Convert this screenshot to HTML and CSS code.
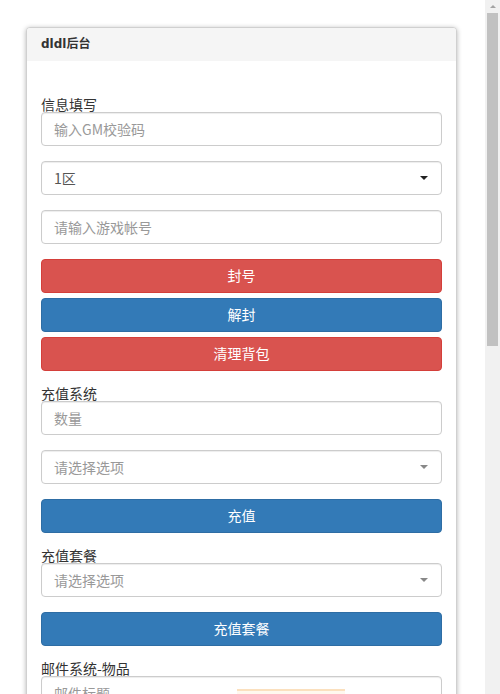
FILE: index.html
```html
<!DOCTYPE html>
<html lang="zh">
<head>
<meta charset="utf-8">
<title>dldl后台</title>
<link rel="stylesheet" href="styles.css">
</head>
<body>
<div class="page">
  <div class="panel">
    <div class="panel-heading">dldl后台</div>
    <div class="panel-body">
      <label class="lbl">信息填写</label>
      <div class="group"><div class="control placeholder">输入GM校验码</div></div>
      <div class="group"><div class="control select"><span>1区</span><i class="caret dark"></i></div></div>
      <div class="group"><div class="control placeholder">请输入游戏帐号</div></div>
      <div class="btns group">
        <button class="btn red">封号</button>
        <button class="btn blue">解封</button>
        <button class="btn red">清理背包</button>
      </div>

      <label class="lbl">充值系统</label>
      <div class="group"><div class="control placeholder">数量</div></div>
      <div class="group"><div class="control select placeholder"><span>请选择选项</span><i class="caret"></i></div></div>
      <div class="group"><button class="btn blue">充值</button></div>

      <label class="lbl">充值套餐</label>
      <div class="group"><div class="control select placeholder"><span>请选择选项</span><i class="caret"></i></div></div>
      <div class="group"><button class="btn blue">充值套餐</button></div>

      <label class="lbl">邮件系统-物品</label>
      <div class="group"><div class="control placeholder">邮件标题</div></div>
    </div>
  </div>
  <div class="toast"></div>
</div>
<div class="scrollbar"><div class="arrow"></div><div class="thumb"></div></div>
</body>
</html>
```
FILE: styles.css
```css
html, body {
  margin: 0;
  padding: 0;
  height: 100%;
  overflow: hidden;
  background: #fff;
}
body {
  font-family: "Noto Sans CJK SC", "Liberation Sans", sans-serif;
  font-size: 14px;
  color: #333;
}
.page {
  width: 485px;
  padding: 27px 0 0 26px;
  box-sizing: border-box;
}
.panel {
  width: 431px;
  box-sizing: border-box;
  border: 1px solid #d0d0d0;
  border-radius: 4px;
  box-shadow: 0 1px 5px rgba(0,0,0,0.3);
  background: #fff;
}
.panel-heading {
  background: #f5f5f5;
  height: 33px;
  line-height: 33px;
  padding: 0 14px;
  font-family: "DejaVu Sans", "Noto Sans CJK SC", sans-serif;
  font-weight: bold;
  font-size: 12px;
  color: #333;
  border-radius: 3px 3px 0 0;
}
.panel-body {
  padding: 36px 14px 15px 14px;
}
.lbl {
  display: block;
  height: 15px;
  line-height: 14px;
  font-size: 14px;
  color: #333;
}
.group {
  margin-bottom: 15px;
}
.control {
  height: 34px;
  box-sizing: border-box;
  border: 1px solid #ccc;
  border-radius: 4px;
  box-shadow: inset 0 1px 1px rgba(0,0,0,0.075);
  padding: 0 12px 1px;
  line-height: 32px;
  color: #555;
  font-size: 14px;
  display: flex;
  align-items: center;
}
.control.placeholder {
  color: #999;
}
.control.select {
  justify-content: space-between;
  padding-right: 12px;
}
.caret {
  width: 0;
  height: 0;
  border-left: 4px solid transparent;
  border-right: 4px solid transparent;
  border-top: 4px solid #888;
  margin-right: 1px;
}
.caret.dark {
  border-top-color: #222;
}
.btns {
  display: flex;
  flex-direction: column;
  gap: 5px;
}
.btn {
  display: block;
  width: 100%;
  height: 34px;
  border: 1px solid transparent;
  border-radius: 4px;
  color: #fff;
  font-family: "Noto Sans CJK SC", "Liberation Sans", sans-serif;
  font-size: 14px;
  padding: 0 0 2px;
  margin: 0;
}
.btn.red {
  background: #d9534f;
  border-color: #d43f3a;
}
.btn.blue {
  background: #337ab7;
  border-color: #2e6da4;
}
.toast {
  position: absolute;
  left: 237px;
  top: 689px;
  width: 108px;
  height: 20px;
  border-top: 2px solid #fbe0be;
  background: #fff8ee;
}
.scrollbar {
  position: fixed;
  top: 0;
  right: 0;
  width: 15px;
  height: 100%;
  background: #f1f1f1;
}
.arrow {
  width: 0;
  height: 0;
  margin: 5px auto 0;
  border-left: 3px solid transparent;
  border-right: 3px solid transparent;
  border-bottom: 3px solid #a3a3a3;
}
.thumb {
  margin: 5px 2px 0 2px;
  height: 333px;
  background: #c1c1c1;
}
```
